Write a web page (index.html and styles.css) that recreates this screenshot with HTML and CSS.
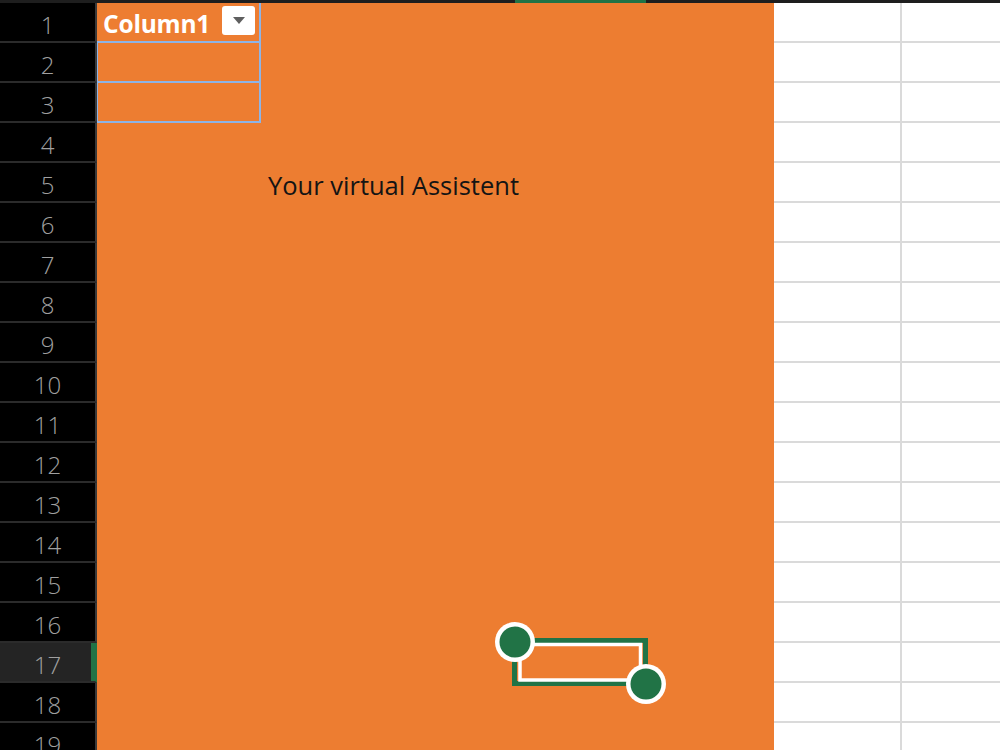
FILE: index.html
```html
<!DOCTYPE html>
<html lang="en">
<head>
    <meta charset="UTF-8">
    <title>Sheet</title>
    <link rel="stylesheet" href="styles.css">
</head>
<body>

    <div class="topbar">
        <div class="topbar-gap"></div>
        <div class="topbar-selected"></div>
    </div>

    <div class="sheet">
        <div class="row-numbers">
            <div class="row-num">1</div>
            <div class="row-num">2</div>
            <div class="row-num">3</div>
            <div class="row-num">4</div>
            <div class="row-num">5</div>
            <div class="row-num">6</div>
            <div class="row-num">7</div>
            <div class="row-num">8</div>
            <div class="row-num">9</div>
            <div class="row-num">10</div>
            <div class="row-num">11</div>
            <div class="row-num">12</div>
            <div class="row-num">13</div>
            <div class="row-num">14</div>
            <div class="row-num">15</div>
            <div class="row-num">16</div>
            <div class="row-num active">17</div>
            <div class="row-num">18</div>
            <div class="row-num">19</div>
        </div>

        <div class="panel">
            <div class="data-table">
                <div class="table-head">
                    <span class="head-title">Column1</span>
                    <span class="filter-btn"><span class="filter-arrow"></span></span>
                </div>
                <div class="table-row"></div>
                <div class="table-row"></div>
            </div>

            <p class="assistant-label">Your virtual Assistent</p>

            <!-- Соединитель с маркерами -->
            <svg class="connector" width="180" height="95" viewBox="0 0 180 95">
                <rect x="24.5" y="22.5" width="131" height="43" fill="none" stroke="#217346" stroke-width="5"/>
                <rect x="30" y="26.5" width="120.5" height="35.5" fill="none" stroke="#ffffff" stroke-width="3.5"/>
                <circle cx="25" cy="24" r="20" fill="#ffffff"/>
                <circle cx="25" cy="24" r="15.5" fill="#217346"/>
                <circle cx="156" cy="66" r="20" fill="#ffffff"/>
                <circle cx="156" cy="66" r="15.5" fill="#217346"/>
            </svg>
        </div>

        <div class="cells" id="cells"></div>
    </div>

    <script>
        // Пустые ячейки справа от панели
        document.addEventListener('DOMContentLoaded', () => {
            const cells = document.getElementById('cells');
            for (let i = 0; i < 19; i++) {
                const left = document.createElement('div');
                left.classList.add('cell', 'cell-first');
                cells.appendChild(left);

                const right = document.createElement('div');
                right.classList.add('cell');
                cells.appendChild(right);
            }
        });
    </script>
</body>
</html>
```

FILE: styles.css
```css
/* Лист */

:root {
    --orange: #ED7D31;
    --green: #217346;
    --grid-line: #dadada;
    --header-line: #2b2b2b;
    --row-num-color: #a0a0a0;
    --table-border: #8eb4e6;
}

body {
    margin: 0;
    padding: 0;
    background-color: #000000;
    font-family: "Open Sans", "Noto Sans", sans-serif;
    overflow: hidden;
    height: 750px;
}

.topbar {
    display: flex;
    height: 3px;
    background-color: #1e1e1e;
}

.topbar-gap {
    width: 515px;
}

.topbar-selected {
    width: 131px;
    background-color: var(--green);
}

.sheet {
    display: flex;
    height: 747px;
    overflow: hidden;
}

.row-numbers {
    width: 97px;
    flex-shrink: 0;
}

.row-num {
    box-sizing: border-box;
    height: 40px;
    border-bottom: 2px solid var(--header-line);
    border-right: 2px solid #3a3a3a;
    color: var(--row-num-color);
    font-size: 24px;
    font-weight: 300;
    line-height: 38px;
    padding-top: 3px;
    text-align: center;
}

.row-num.active {
    background-color: #242424;
    border-right-color: var(--green);
    box-shadow: inset -4px 0 0 var(--green);
}

.panel {
    position: relative;
    width: 677px;
    flex-shrink: 0;
    background-color: var(--orange);
}

.data-table {
    width: 164px;
}

.table-head {
    box-sizing: border-box;
    height: 40px;
    display: flex;
    align-items: flex-start;
    justify-content: space-between;
    padding: 3px 4px 0 6px;
    border-bottom: 2px solid var(--table-border);
    border-right: 2px solid var(--table-border);
}

.head-title {
    color: #ffffff;
    font-weight: bold;
    font-size: 24.5px;
    line-height: 36px;
    letter-spacing: -0.2px;
}

.filter-btn {
    width: 33px;
    height: 29px;
    background-color: #ffffff;
    border-radius: 3px;
    display: flex;
    align-items: center;
    justify-content: center;
}

.filter-arrow {
    width: 0;
    height: 0;
    border-left: 6px solid transparent;
    border-right: 6px solid transparent;
    border-top: 7px solid #5f5f5f;
}

.table-row {
    box-sizing: border-box;
    height: 40px;
    border-left: 1px solid var(--table-border);
    border-bottom: 2px solid var(--table-border);
    border-right: 2px solid var(--table-border);
}

.assistant-label {
    margin: 46px 0 0 171px;
    font-size: 25.5px;
    line-height: 32px;
    color: #141414;
}

.connector {
    position: absolute;
    left: 393px;
    top: 615px;
}

.cells {
    flex: 1;
    display: grid;
    grid-template-columns: 128px 1fr;
    grid-auto-rows: 40px;
    background-color: #ffffff;
}

.cell {
    box-sizing: border-box;
    border-bottom: 2px solid var(--grid-line);
}

.cell-first {
    border-right: 2px solid var(--grid-line);
}
```
